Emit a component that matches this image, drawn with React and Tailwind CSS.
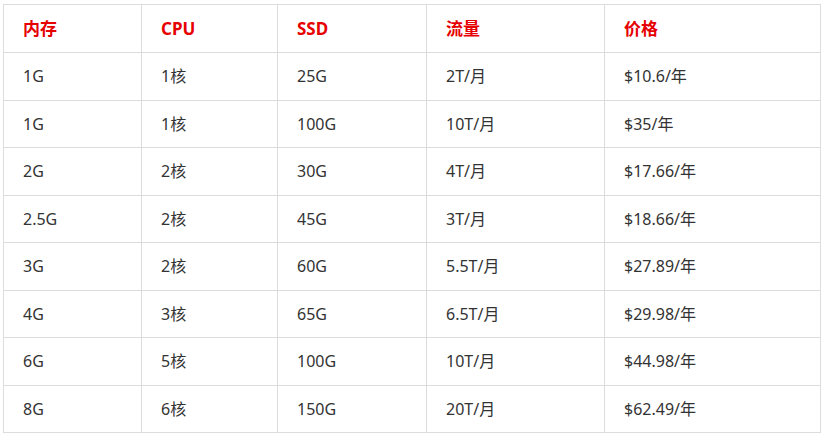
export default function App() {
  const head = ["内存", "CPU", "SSD", "流量", "价格"];
  const rows = [
    ["1G", "1核", "25G", "2T/月", "$10.6/年"],
    ["1G", "1核", "100G", "10T/月", "$35/年"],
    ["2G", "2核", "30G", "4T/月", "$17.66/年"],
    ["2.5G", "2核", "45G", "3T/月", "$18.66/年"],
    ["3G", "2核", "60G", "5.5T/月", "$27.89/年"],
    ["4G", "3核", "65G", "6.5T/月", "$29.98/年"],
    ["6G", "5核", "100G", "10T/月", "$44.98/年"],
    ["8G", "6核", "150G", "20T/月", "$62.49/年"],
  ];
  const widths = ["w-[138px]", "w-[136px]", "w-[149px]", "w-[178px]", "w-[216px]"];
  return (
    <div
      className="bg-white w-[825px] h-[437px] pt-[4px] pl-[3px]"
      style={{ fontFamily: '"Noto Sans", "Noto Sans CJK SC", sans-serif' }}
    >
      <table className="border-collapse table-fixed w-[818px] text-[16px]">
        <colgroup>
          {widths.map((w, i) => (
            <col key={i} className={w} />
          ))}
        </colgroup>
        <thead>
          <tr className="h-[48px]">
            {head.map((h, i) => (
              <th
                key={i}
                className="border border-[#dcdcdc] text-left text-[17px] font-bold text-[#e60000] pl-[19px] p-0"
              >
                {h}
              </th>
            ))}
          </tr>
        </thead>
        <tbody>
          {rows.map((r, ri) => (
            <tr key={ri} className="h-[47.5px]">
              {r.map((c, ci) => (
                <td
                  key={ci}
                  className="border border-[#dcdcdc] text-[#333] pl-[19px] p-0"
                >
                  {c}
                </td>
              ))}
            </tr>
          ))}
        </tbody>
      </table>
    </div>
  );
}
